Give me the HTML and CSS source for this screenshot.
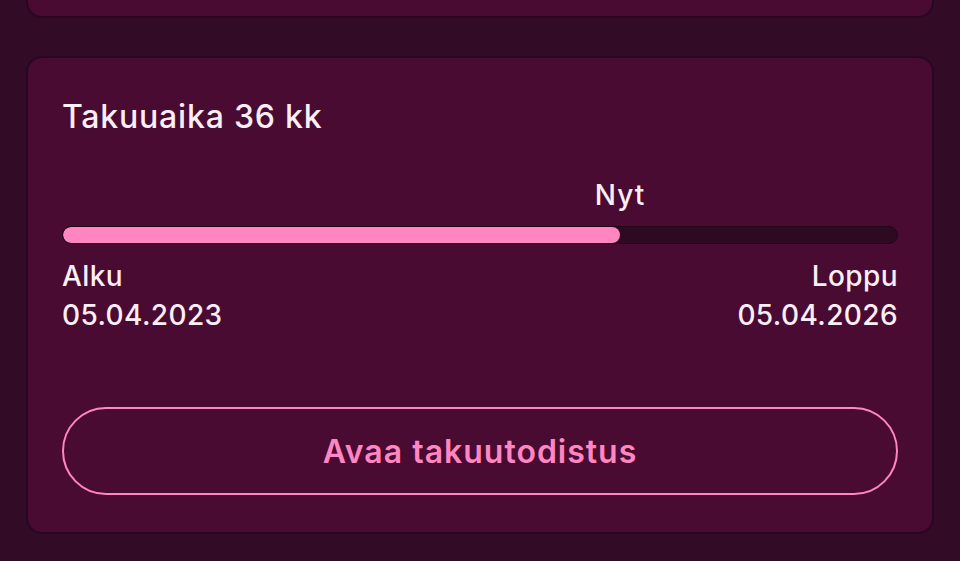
FILE: index.html
```html
<!DOCTYPE html>
<html lang="fi">
<head>
<meta charset="utf-8">
<title>Takuu</title>
<link rel="stylesheet" href="styles.css">
</head>
<body>
<div class="page">
  <div class="card card-prev"></div>
  <section class="card warranty">
    <h2 class="title">Takuuaika 36 kk</h2>
    <div class="timeline">
      <div class="now-row">
        <span class="now" style="left: 66.75%">Nyt</span>
      </div>
      <div class="track">
        <div class="fill" style="width: 66.75%"></div>
      </div>
      <div class="ends">
        <div class="end">
          <div class="end-label">Alku</div>
          <div class="end-date">05.04.2023</div>
        </div>
        <div class="end end-right">
          <div class="end-label">Loppu</div>
          <div class="end-date">05.04.2026</div>
        </div>
      </div>
    </div>
    <button class="btn" type="button">Avaa takuutodistus</button>
  </section>
</div>
</body>
</html>
```

FILE: styles.css
```css
* { box-sizing: border-box; }
html, body {
  margin: 0;
  padding: 0;
  background: #320b26;
  height: 100%;
  overflow: hidden;
}
body {
  font-family: Inter, "Noto Sans", sans-serif;
  color: #fbeef5;
}
.page {
  display: flex;
  flex-direction: column;
  gap: 38px;
  padding: 0 26px;
  margin-top: -120px;
}
.card {
  background: #490b32;
  border: 2px solid #290720;
  border-radius: 16px;
}
.card-prev {
  height: 138px;
}
.warranty {
  padding: 39px 34px 37px;
  display: flex;
  flex-direction: column;
}
.title {
  margin: 0;
  font-size: 32px;
  font-weight: 500;
  line-height: 40px;
  letter-spacing: 0.8px;
}
.timeline {
  margin-top: 40px;
}
.now-row {
  position: relative;
  height: 49px;
}
.now {
  position: absolute;
  top: 0;
  transform: translateX(-50%);
  font-size: 28px;
  font-weight: 500;
  line-height: 36px;
  letter-spacing: 1px;
}
.track {
  height: 18px;
  border-radius: 9px;
  background: #2e0a22;
  border: 1px solid #22061a;
  overflow: hidden;
}
.fill {
  height: 100%;
  background: #ff86c1;
  border-radius: 9px;
}
.ends {
  display: flex;
  justify-content: space-between;
  margin-top: 13px;
}
.end-label, .end-date {
  font-size: 28px;
  font-weight: 500;
  line-height: 39px;
  letter-spacing: 0.4px;
}
.end-right { text-align: right; }
.btn {
  margin-top: 72px;
  height: 88px;
  border: 2px solid #ff86c1;
  border-radius: 44px;
  background: transparent;
  color: #ff86c1;
  font-family: inherit;
  font-size: 32px;
  font-weight: 600;
  letter-spacing: 1px;
  cursor: pointer;
}
```
